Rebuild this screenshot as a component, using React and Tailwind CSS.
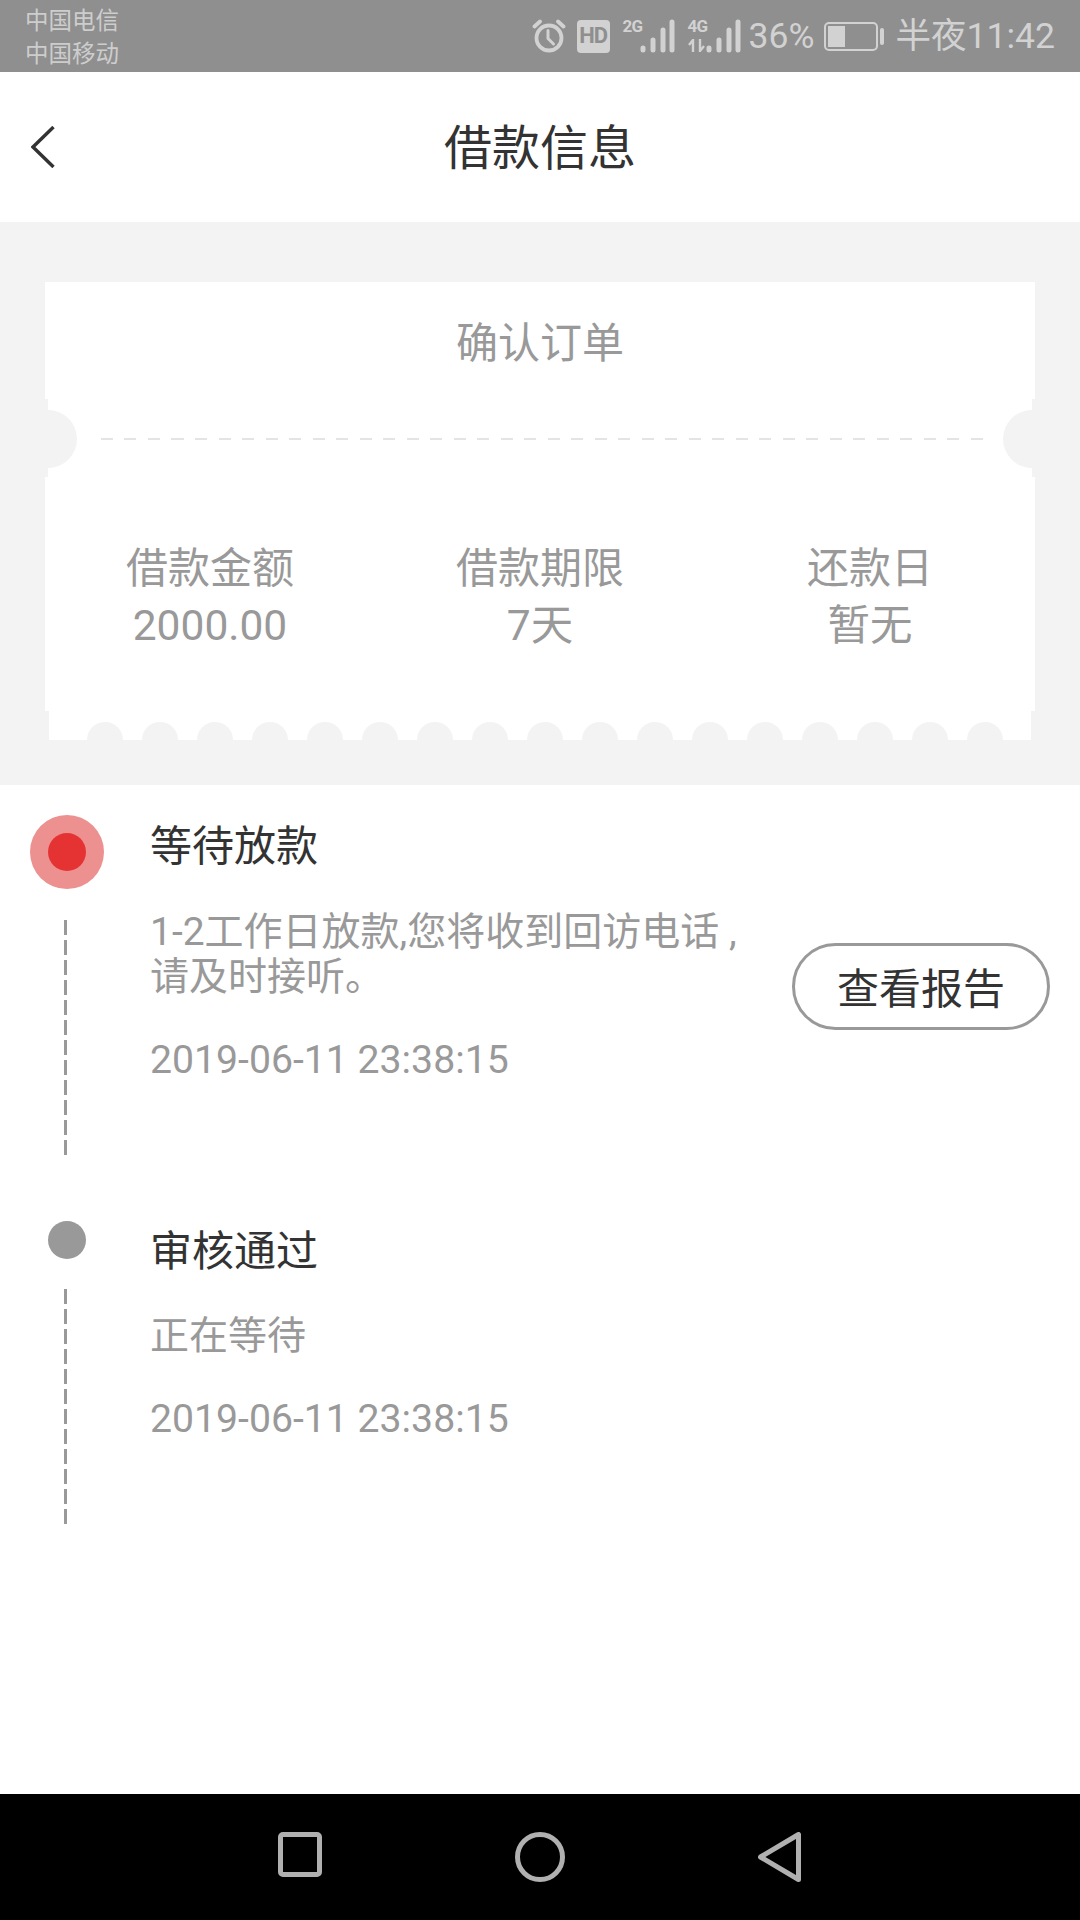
const cjk = { fontFamily: 'Roboto, "Noto Sans CJK SC", sans-serif' };

const Signal = () => (
  <svg width="35" height="34" viewBox="0 0 35 34" fill="none" stroke="#d2d2d2" strokeWidth="5" strokeLinecap="round">
    <path d="M3 29v2M13 21v10M23 11v20M32 3v28" />
  </svg>
);

const AlarmIcon = () => (
  <svg width="34" height="34" viewBox="0 0 34 34" fill="none" stroke="#d2d2d2" strokeLinecap="round">
    <circle cx="17" cy="19" r="12.5" strokeWidth="3.8" />
    <path d="M16 11.5v8l5.5 5.5" strokeWidth="3" />
    <path d="M2.5 7.5 8 2.5M31.5 7.5 26 2.5" strokeWidth="3.8" />
  </svg>
);

const StatusBar = () => (
  <div className="h-[72px] shrink-0 bg-[#8f8f8f] flex items-center justify-between pl-[25px] pr-[25px] text-[#d2d2d2]">
    <div className="flex flex-col text-[23.5px] leading-[33px] pt-[4px] text-[#cdcdcd]">
      <span>中国电信</span>
      <span>中国移动</span>
    </div>
    <div className="flex items-center">
      <AlarmIcon />
      <div className="ml-[11px] w-[33px] h-[33px] rounded-[4px] bg-[#d2d2d2] flex items-center justify-center text-[#8f8f8f] text-[22px] font-bold leading-none tracking-tighter">
        HD
      </div>
      <div className="ml-[13px] w-[17px] h-[34px] text-[17px] font-bold leading-[15px] tracking-tighter">2G</div>
      <Signal />
      <div className="ml-[13px] w-[18px] h-[34px] flex flex-col text-[17px] font-bold leading-[15px] tracking-tighter">
        <span>4G</span>
        <svg className="mt-[5px]" width="18" height="13" viewBox="0 0 18 13" fill="none" stroke="#d2d2d2" strokeWidth="2.4">
          <path d="M5 13V1L1 6M12 0v12l4-5" />
        </svg>
      </div>
      <Signal />
      <span className="ml-[8px] pt-[2px] w-[63px] text-[35.5px] leading-none whitespace-nowrap">36%</span>
      <div className="ml-[12px] flex items-center">
        <div className="w-[54px] h-[29px] rounded-[5px] border-2 border-[#d2d2d2] p-[2px]">
          <div className="h-full w-[17px] bg-[#d2d2d2]" />
        </div>
        <div className="ml-[2px] w-[4px] h-[17px] rounded-[2px] bg-[#d2d2d2]" />
      </div>
      <span className="ml-[12px] pt-[2px] text-[35.5px] leading-none whitespace-nowrap">半夜11:42</span>
    </div>
  </div>
);

const Header = () => (
  <header className="h-[150px] shrink-0 grid grid-cols-[1fr_auto_1fr] items-center bg-white pl-[31px]">
    <svg width="24" height="42" viewBox="0 0 24 42" fill="none" stroke="#333333" strokeWidth="3.4">
      <path d="M22.5 1 2 21l20.5 20" />
    </svg>
    <h1 className="text-[48px] leading-none pt-[3px] text-[#333333] font-normal -ml-[31px]">借款信息</h1>
    <div />
  </header>
);

const InfoColumn = ({ label, value }) => (
  <div className="flex flex-col items-center leading-[57px] text-[#999999]">
    <span className="text-[42px]">{label}</span>
    <span className="text-[42.5px]">{value}</span>
  </div>
);

const Ticket = () => (
  <section className="bg-[#f3f3f3] h-[563px] pt-[60px] shrink-0">
    <div className="mx-[45px] h-[117px] bg-white flex items-center justify-center pt-[6px] text-[42px] text-[#999999]">
      确认订单
    </div>
    <div className="mx-[48px] h-[78px] pt-[2px] bg-white flex items-center justify-between">
      <div className="w-[29px] h-[58px] rounded-r-full bg-[#f3f3f3]" />
      <div className="flex-1 ml-[24px] mr-[20px] h-[2px] bg-[repeating-linear-gradient(90deg,#e4e4e4_0,#e4e4e4_12px,transparent_12px,transparent_23.5px)]" />
      <div className="w-[29px] h-[58px] rounded-l-full bg-[#f3f3f3]" />
    </div>
    <div className="mx-[45px] h-[234px] bg-white grid grid-cols-3 pt-[63px]">
      <InfoColumn label="借款金额" value="2000.00" />
      <InfoColumn label="借款期限" value="7天" />
      <InfoColumn label="还款日" value="暂无" />
    </div>
    <div className="mx-[49px] h-[29px] bg-white flex items-end justify-between pl-[38px] pr-[28px]">
      {Array.from({ length: 17 }).map((_, i) => (
        <div key={i} className="w-[36px] h-[18px] rounded-t-full bg-[#f3f3f3]" />
      ))}
    </div>
  </section>
);

const Dash = ({ className }) => (
  <div
    className={
      'ml-[64px] w-[3px] bg-[repeating-linear-gradient(180deg,#999999_0,#999999_15px,transparent_15px,transparent_20px)] ' +
      className
    }
  />
);

const Timeline = () => (
  <section className="flex-1 bg-white flex flex-col pt-[30px]">
    <div className="flex">
      <div className="w-[150px] shrink-0">
        <div className="ml-[30px] w-[74px] h-[74px] rounded-full bg-[#ec9090] flex items-center justify-center">
          <div className="w-[38px] h-[38px] rounded-full bg-[#e53333]" />
        </div>
        <Dash className="mt-[31px] h-[235px]" />
      </div>
      <div className="flex-1 flex">
        <div className="w-[642px] shrink-0 pt-[9px]">
          <h2 className="text-[42px] leading-[46px] font-normal text-[#333333]">等待放款</h2>
          <p className="mt-[40px] text-[39px] leading-[45px] text-[#999999]">
            1-2工作日放款,您将收到回访电话 ,
            <br />
            请及时接听。
          </p>
          <p className="mt-[37px] text-[39.2px] leading-[46px] text-[#999999]">2019-06-11 23:38:15</p>
        </div>
        <button className="mt-[128px] w-[258px] h-[87px] pt-[6px] rounded-full border-[3px] border-[#999999] text-[42px] leading-none text-[#333333]">
          查看报告
        </button>
      </div>
    </div>
    <div className="flex mt-[48px]">
      <div className="w-[150px] shrink-0">
        <div className="ml-[30px] w-[73px] h-[73px] flex items-center justify-center">
          <div className="w-[38px] h-[38px] rounded-full bg-[#999999]" />
        </div>
        <Dash className="mt-[13px] h-[236px]" />
      </div>
      <div className="flex-1 pt-[26px]">
        <h2 className="text-[42px] leading-[46px] font-normal text-[#333333]">审核通过</h2>
        <p className="mt-[39px] text-[39px] leading-[45px] text-[#999999]">正在等待</p>
        <p className="mt-[37px] text-[39.2px] leading-[46px] text-[#999999]">2019-06-11 23:38:15</p>
      </div>
    </div>
  </section>
);

const NavBar = () => (
  <nav className="h-[126px] shrink-0 bg-black flex items-start pt-[38px] pl-[278px]">
    <svg width="44" height="45" viewBox="0 0 44 45" fill="none" stroke="#b0b0b0" strokeWidth="5">
      <rect x="2.5" y="2.5" width="39" height="40" rx="2.5" />
    </svg>
    <svg className="ml-[193px]" width="50" height="50" viewBox="0 0 50 50" fill="none" stroke="#b0b0b0" strokeWidth="5">
      <circle cx="25" cy="25" r="22.5" />
    </svg>
    <svg className="ml-[193px]" width="43" height="50" viewBox="0 0 43 50" fill="none" stroke="#b0b0b0" strokeWidth="5" strokeLinejoin="round">
      <path d="M40.5 2.5v45L2.5 25z" />
    </svg>
  </nav>
);

export default function App() {
  return (
    <div className="w-[1080px] h-[1920px] flex flex-col overflow-hidden bg-white" style={cjk}>
      <StatusBar />
      <Header />
      <Ticket />
      <Timeline />
      <NavBar />
    </div>
  );
}
